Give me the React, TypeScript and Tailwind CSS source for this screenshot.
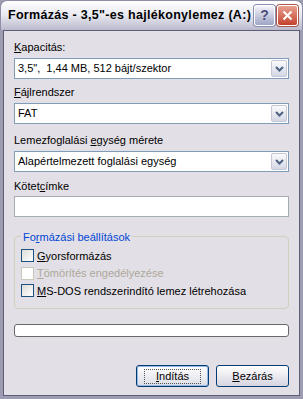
const font = { fontFamily: '"Liberation Sans", Arial, sans-serif' };

function Chevron() {
  return (
    <svg width="9" height="6" viewBox="0 0 9 6">
      <path d="M1 1 L4.5 4.5 L8 1" fill="none" stroke="#4d6185" strokeWidth="2" />
    </svg>
  );
}

function Combo({ value }: { value: string }) {
  return (
    <div className="flex h-[21px] items-center border border-[#7f9db9] bg-white">
      <div className="flex-1 whitespace-pre pl-[3px] text-[11px] text-black">{value}</div>
      <div className="mr-[1px] flex h-[17px] w-[16px] items-center justify-center rounded-[2px] border border-[#c3c7d6] bg-gradient-to-b from-[#fbfbfd] to-[#d4d7e4]">
        <Chevron />
      </div>
    </div>
  );
}

function Check({ label, u, disabled }: { label: string; u: number; disabled?: boolean }) {
  return (
    <div className="flex h-[17.5px] items-center gap-[3px]">
      <div
        className={
          "h-[13px] w-[13px] border " +
          (disabled ? "border-[#cac8bb] bg-white" : "border-[#1c5180] bg-gradient-to-br from-[#dcdcd8] to-white")
        }
      />
      <span className={"text-[11px] " + (disabled ? "text-[#aca899]" : "text-black")}>
        {label.slice(0, u)}
        <span className="underline">{label[u]}</span>
        {label.slice(u + 1)}
      </span>
    </div>
  );
}

function Label({ pre, u, post }: { pre: string; u: string; post: string }) {
  return (
    <div className="h-[13px] text-[11px] leading-[13px] text-black">
      {pre}
      <span className="underline">{u}</span>
      {post}
    </div>
  );
}

export default function App() {
  return (
    <div className="flex h-[399px] w-[303px] flex-col bg-[#9c9cb2]" style={font}>
      {/* title bar */}
      <div className="flex h-[30px] shrink-0 items-center rounded-t-[7px] border border-b-0 border-[#8e8ea6] bg-gradient-to-b from-[#ffffff] via-[#e8e8f0] to-[#b9b9cc] pl-[7px] pr-[4px]">
        <div className="flex-1 truncate text-[12.5px] font-bold tracking-[0.3px] text-black">
          Formázás - 3,5"-es hajlékonylemez (A:)
        </div>
        <div className="flex gap-[2px]">
          <div className="flex h-[21px] w-[21px] items-center justify-center rounded-[3px] border border-[#ffffff] bg-gradient-to-b from-[#f4f4fa] to-[#9ea4c4] shadow-[0_0_0_1px_#8a8fb0] text-[14px] font-bold text-[#4b4f7a]">
            ?
          </div>
          <div className="flex h-[21px] w-[21px] items-center justify-center rounded-[3px] border border-[#ffffff] bg-gradient-to-b from-[#e8a090] to-[#c1402d] shadow-[0_0_0_1px_#a8574a]">
            <svg width="11" height="11" viewBox="0 0 11 11">
              <path d="M1.5 1.5 L9.5 9.5 M9.5 1.5 L1.5 9.5" stroke="#fff" strokeWidth="2" />
            </svg>
          </div>
        </div>
      </div>

      {/* body */}
      <div className="mx-[3px] mb-[3px] flex flex-1 flex-col border border-[#5d5d77] bg-[#e3dfe6] px-[10px] pt-[10px]">
        <Label pre="" u="K" post="apacitás:" />
        <div className="mt-[4px]">
          <Combo value={'3,5",  1,44 MB, 512 bájt/szektor'} />
        </div>
        <div className="mt-[7px]">
          <Label pre="" u="F" post="ájlrendszer" />
        </div>
        <div className="mt-[4px]">
          <Combo value="FAT" />
        </div>
        <div className="mt-[10px]">
          <Label pre="Lemezfoglalási " u="e" post="gység mérete" />
        </div>
        <div className="mt-[4px]">
          <Combo value="Alapértelmezett foglalási egység" />
        </div>
        <div className="mt-[8px]">
          <Label pre="Kötet" u="c" post="ímke" />
        </div>
        <div className="mt-[3px] h-[21px] border border-[#a5acb2] bg-white" />

        {/* group box */}
        <div className="relative mt-[19px] h-[73px] rounded-[4px] border border-[#d0d0bf] px-[6px] pt-[10px]">
          <div className="absolute left-[6px] top-[-8px] bg-[#e3dfe6] px-[2px] text-[11px] text-[#0046d5]">
            Fo<span className="underline">r</span>mázási beállítások
          </div>
          <Check label="Gyorsformázás" u={0} />
          <Check label="Tömörítés engedélyezése" u={0} disabled />
          <Check label="MS-DOS rendszerindító lemez létrehozása" u={0} />
        </div>

        <div className="mt-[15px] h-[13px] rounded-[3px] border border-[#686868] bg-white" />

        <div className="mt-[28px] flex justify-end gap-[7px]">
          <div className="flex h-[22px] w-[73px] items-center justify-center rounded-[3px] border border-[#003c74] bg-gradient-to-b from-[#ffffff] to-[#dcdce6] shadow-[inset_0_0_0_1px_#97b8e4] text-[11px] text-black">
            <div className="border border-dotted border-[#555] px-[11px] leading-[13px]">
              <span className="underline">I</span>ndítás
            </div>
          </div>
          <div className="flex h-[22px] w-[73px] items-center justify-center rounded-[3px] border border-[#003c74] bg-gradient-to-b from-[#ffffff] to-[#d6d4e0] text-[11px] text-black">
            <span className="underline">B</span>ezárás
          </div>
        </div>
      </div>
    </div>
  );
}
